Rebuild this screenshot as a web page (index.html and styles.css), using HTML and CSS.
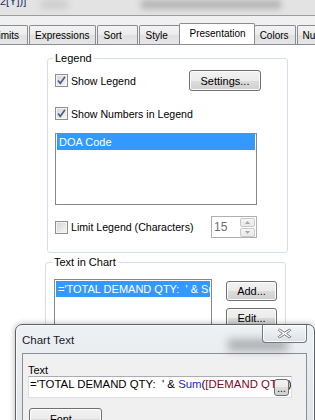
FILE: index.html
```html
<!DOCTYPE html>
<html lang="en">
<head>
  <meta charset="UTF-8">
  <meta name="viewport" content="width=device-width, initial-scale=1.0">
  <title>Chart Properties - Presentation</title>
  <link rel="stylesheet" href="styles.css">
</head>
<body>
  <div class="topbar">
    <span class="expr-tail">2[Y])]</span>
    <span class="smear smear-a"></span>
    <span class="smear smear-b"></span>
  </div>

  <div class="tabstrip">
    <div class="tab tab-first">Limits</div>
    <div class="tab">Expressions</div>
    <div class="tab">Sort</div>
    <div class="tab">Style</div>
    <div class="tab active">Presentation</div>
    <div class="tab">Colors</div>
    <div class="tab">Number</div>
  </div>

  <div class="panel">
    <fieldset class="group group-legend">
      <legend>Legend</legend>
      <div class="row row-top">
        <label class="check">
          <span class="box">
            <svg width="11" height="11" viewBox="0 0 11 11"><path d="M2 5.5 L4.3 8.3 L9 1.8" fill="none" stroke="#4d5f8c" stroke-width="1.7"/></svg>
          </span>
          Show Legend
        </label>
        <button class="btn btn-settings">Settings...</button>
      </div>
      <div class="row row-mid">
        <label class="check">
          <span class="box">
            <svg width="11" height="11" viewBox="0 0 11 11"><path d="M2 5.5 L4.3 8.3 L9 1.8" fill="none" stroke="#4d5f8c" stroke-width="1.7"/></svg>
          </span>
          Show Numbers in Legend
        </label>
      </div>
      <div class="listbox list-legend">
        <div class="item selected">DOA Code</div>
      </div>
      <div class="row row-limit">
        <label class="check">
          <span class="box"></span>
          Limit Legend (Characters)
        </label>
        <div class="spin">
          <span class="spin-value">15</span>
          <div class="spin-btns">
            <span class="spin-btn"><svg width="5" height="3" viewBox="0 0 5 3"><path d="M0 3 L2.5 0 L5 3 Z" fill="#a6a6a6"/></svg></span>
            <span class="spin-btn"><svg width="5" height="3" viewBox="0 0 5 3"><path d="M0 0 L2.5 3 L5 0 Z" fill="#a6a6a6"/></svg></span>
          </div>
        </div>
      </div>
    </fieldset>

    <fieldset class="group group-text">
      <legend>Text in Chart</legend>
      <div class="chart-row">
        <div class="listbox list-text">
          <div class="item selected">='TOTAL DEMAND QTY:&nbsp; ' &amp; Sum([DEMAND QTY])</div>
        </div>
        <div class="btn-col">
          <button class="btn btn-small">Add...</button>
          <button class="btn btn-small">Edit...</button>
        </div>
      </div>
    </fieldset>
  </div>

  <!-- fenêtre Chart Text par-dessus -->
  <div class="dialog">
    <span class="glass-smudge"></span>
    <div class="titlebar">
      <span class="title">Chart Text</span>
      <span class="close">
        <svg width="15" height="11" viewBox="0 0 15 11"><path d="M2.5 1 L7.5 4.2 L12.5 1 L13.8 2.3 L9.6 5.5 L13.8 8.7 L12.5 10 L7.5 6.8 L2.5 10 L1.2 8.7 L5.4 5.5 L1.2 2.3 Z" fill="#fff" stroke="#6b6f75" stroke-width="0.9" stroke-linejoin="round"/></svg>
      </span>
    </div>
    <div class="client">
      <div class="field-label">Text</div>
      <div class="textbox">
        <span class="formula">='TOTAL DEMAND QTY:&nbsp; ' &amp; <span class="fn">Sum</span>(<span class="fld">[DEMAND QTY]</span>)</span>
        <span class="more">...</span>
      </div>
      <button class="btn btn-font">Font...</button>
    </div>
  </div>
</body>
</html>
```

FILE: styles.css
```css
* {
  box-sizing: border-box;
}
body {
  margin: 0;
  width: 315px;
  height: 420px;
  overflow: hidden;
  position: relative;
  background: #fff;
  font-family: "Liberation Sans", Arial, sans-serif;
  font-size: 10.6px;
  color: #000;
}

/* bandeau flou du haut */
.topbar {
  height: 16px;
  background: #e3e3e3;
  border-bottom: 1px solid #9d9d9d;
  display: flex;
  align-items: flex-start;
  overflow: hidden;
}
.expr-tail {
  margin-top: -5px;
  color: #1d2b6b;
  font-size: 11px;
  line-height: 13px;
}
.smear {
  height: 9px;
  background: #b4b4b4;
  filter: blur(3px);
}
.smear-a {
  margin-left: 15px;
  width: 27px;
  background: #cdcdcd;
}
.smear-b {
  margin-left: 73px;
  width: 140px;
}

/* onglets */
.tabstrip {
  height: 28px;
  background: #f0f0f0;
  display: flex;
  align-items: flex-end;
  gap: 1px;
  overflow: hidden;
}
.tab {
  flex-shrink: 0;
  min-width: 41px;
  height: 19px;
  padding: 3px 6px 0 5px;
  border: 1px solid #898c95;
  border-bottom: 0;
  border-radius: 2px 2px 0 0;
  background: linear-gradient(#f3f3f3, #ebebeb 50%, #dfdfdf 50%, #e6e6e6);
  font-size: 10px;
  line-height: 13px;
  white-space: nowrap;
}
.tab-first {
  margin-left: -13px;
}
.tab.active {
  height: 22px;
  margin: 0 -2px -1px;
  padding: 3px 8px 0 9px;
  background: #fff;
  position: relative;
  z-index: 1;
}

/* contenu de l'onglet */
.panel {
  border-top: 1px solid #898c95;
  background: #fff;
  padding-top: 7px;
  height: 380px;
}
.group {
  margin: 0;
  min-width: 0;
  border: 1px solid #d5dfe5;
  border-radius: 3px;
}
.group legend {
  padding: 0 2px;
  margin-left: -2px;
  line-height: 13px;
  font-size: 11px;
}
.group-legend {
  margin-left: 47px;
  width: 241px;
  padding: 5px 30px 14px 7px;
}
.group-text {
  margin: 3px 0 0 45px;
  width: 241px;
  height: 90px;
  padding: 10px 8px 0 8px;
}
.row {
  display: flex;
  align-items: center;
}
.row-top {
  height: 21px;
}
.row-mid {
  height: 13px;
  margin-top: 16px;
}
.row-limit {
  height: 22px;
  margin-top: 11px;
}
.check {
  display: flex;
  align-items: center;
  gap: 3px;
  flex: 1;
  white-space: nowrap;
}
.box {
  width: 13px;
  height: 13px;
  border: 1px solid #8e8f8f;
  background: linear-gradient(135deg, #d4d4d4, #f7f7f7);
  box-shadow: inset 0 0 0 1px #f4f4f4;
  display: flex;
  align-items: center;
  justify-content: center;
}

/* boutons */
.btn {
  font-family: inherit;
  font-size: 11px;
  color: #000;
  border: 1px solid #707070;
  border-radius: 3px;
  background: linear-gradient(#f2f2f2, #ebebeb 50%, #dddddd 50%, #cfcfcf);
  box-shadow: inset 0 0 0 1px #fcfcfc;
  padding: 0;
  line-height: 16px;
}
.btn-settings {
  width: 72px;
  height: 21px;
  margin-right: -4px;
}
.btn-small {
  width: 51px;
  height: 20px;
}
.btn-font {
  width: 73px;
  height: 22px;
  margin: 10px 0 0 1px;
}

/* listes */
.listbox {
  border: 1px solid #828790;
  background: #fff;
  padding: 0 1px;
  overflow: hidden;
}
.list-legend {
  height: 72px;
  margin-top: 13px;
}
.item {
  height: 16px;
  line-height: 16px;
  padding-left: 2px;
  white-space: nowrap;
  overflow: hidden;
  font-size: 11px;
}
.item.selected {
  background: #3399ff;
  color: #fff;
}
.chart-row {
  display: flex;
  align-items: flex-start;
  gap: 14px;
}
.list-text {
  width: 158px;
  height: 62px;
  padding-top: 1px;
}
.btn-col {
  display: flex;
  flex-direction: column;
  gap: 7px;
  margin-top: 2px;
}

/* champ numérique désactivé */
.spin {
  width: 46px;
  height: 22px;
  border: 1px solid #afafaf;
  background: #fff;
  display: flex;
  align-items: center;
  padding-left: 2px;
}
.spin-value {
  font-size: 12px;
  color: #6d6d6d;
  flex: 1;
}
.spin-btns {
  display: flex;
  flex-direction: column;
  gap: 1px;
  margin-right: 1px;
}
.spin-btn {
  width: 15px;
  height: 9px;
  border: 1px solid #c9c9c9;
  border-radius: 2px;
  background: linear-gradient(#f5f5f5, #e8e8e8);
  display: flex;
  align-items: center;
  justify-content: center;
}

/* dialogue Chart Text */
.dialog {
  position: absolute;
  left: 15px;
  top: 324px;
  width: 300px;
  height: 110px;
  padding: 0 7px 0 6px;
  border: 1px solid #5c6168;
  border-radius: 7px 7px 0 0;
  background: linear-gradient(#eef1f4, #dfe4e9);
  box-shadow: inset 0 0 0 1px #fafbfc, 0 0 6px rgba(0, 0, 0, 0.3);
}
.glass-smudge {
  position: absolute;
  left: 212px;
  top: 14px;
  width: 60px;
  height: 12px;
  background: rgba(60, 60, 60, 0.35);
  filter: blur(4px);
}
.titlebar {
  height: 28px;
  display: flex;
  align-items: flex-start;
  position: relative;
}
.title {
  padding-top: 8px;
  font-size: 11.5px;
  line-height: 14px;
  color: #141a2a;
}
.close {
  margin-left: auto;
  width: 45px;
  height: 18px;
  border: 1px solid #6f7780;
  border-top: 0;
  border-radius: 0 0 4px 4px;
  background: linear-gradient(#f4f6f8, #dde1e6);
  box-shadow: inset 0 0 0 1px #fbfcfd;
  display: flex;
  align-items: center;
  justify-content: center;
}
.client {
  height: 80px;
  border: 1px solid #8b8e92;
  background: #f0f0f0;
  padding: 10px 0 0 5px;
}
.field-label {
  line-height: 12px;
  font-size: 11px;
}
.textbox {
  position: relative;
  width: 264px;
  height: 22px;
  border: 1px solid #dbdfe6;
  border-top-color: #abadb3;
  background: #fff;
  padding-left: 1px;
  overflow: hidden;
  white-space: nowrap;
  line-height: 14px;
  font-size: 11.4px;
}
.fn {
  color: #1f1fd6;
}
.fld {
  color: #7a0a2a;
}
.more {
  position: absolute;
  right: 2px;
  top: 2px;
  width: 15px;
  height: 17px;
  border: 1px solid #707070;
  border-radius: 3px;
  background: linear-gradient(#f2f2f2, #ebebeb 50%, #dddddd 50%, #cfcfcf);
  font-size: 10px;
  line-height: 18px;
  text-align: center;
}
```
